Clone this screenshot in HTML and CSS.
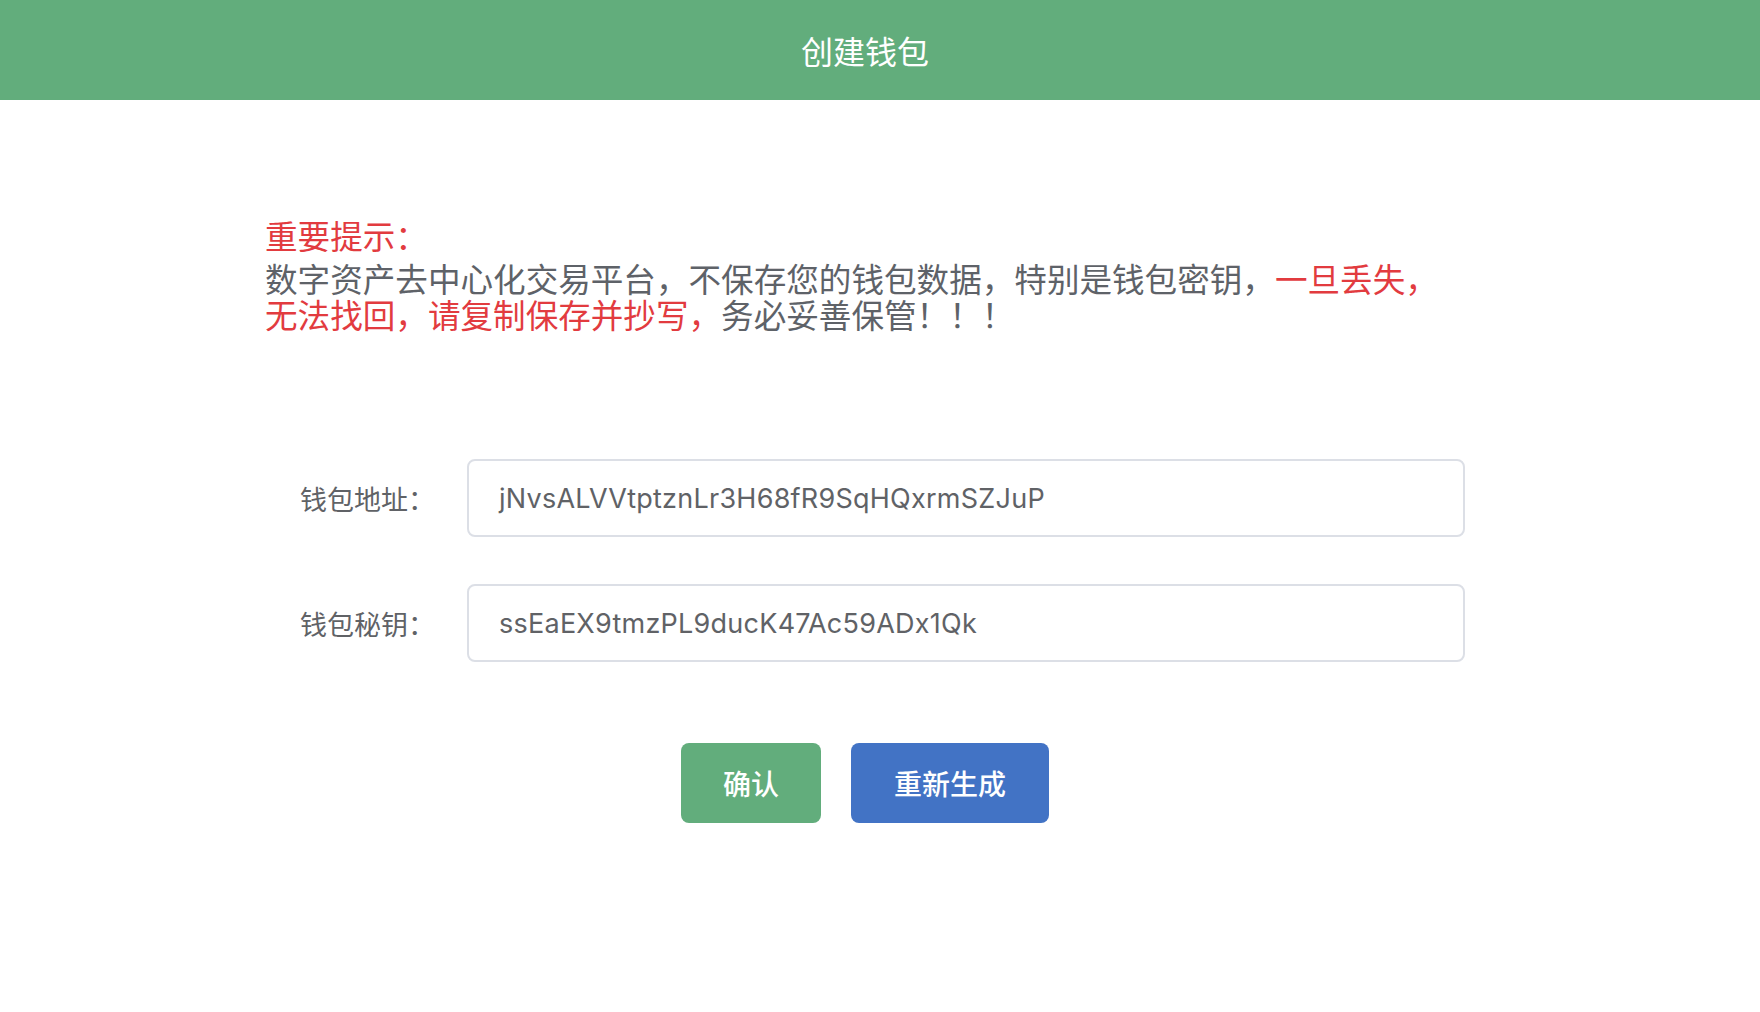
FILE: index.html
```html
<!DOCTYPE html>
<html lang="zh-CN">
<head>
<meta charset="utf-8">
<title>创建钱包</title>
<link rel="stylesheet" href="styles.css">
</head>
<body>
<header class="header"><h1 class="header-title">创建钱包</h1></header>
<div class="wrap">
  <main class="main">
    <section class="notice">
      <p class="notice-title">重要提示：</p>
      <p class="notice-text">数字资产去中心化交易平台，不保存您的钱包数据，特别是钱包密钥，<span class="red">一旦丢失，无法找回，请复制保存并抄写，</span>务必妥善保管！！！</p>
    </section>
    <form class="form">
      <div class="row">
        <label class="label">钱包地址：</label>
        <div class="input">jNvsALVVtptznLr3H68fR9SqHQxrmSZJuP</div>
      </div>
      <div class="row">
        <label class="label">钱包秘钥：</label>
        <div class="input">ssEaEX9tmzPL9ducK47Ac59ADx1Qk</div>
      </div>
      <div class="actions">
        <button type="button" class="btn btn-green">确认</button>
        <button type="button" class="btn btn-blue">重新生成</button>
      </div>
    </form>
  </main>
</div>
</body>
</html>
```
FILE: styles.css
```css
html, body {
  margin: 0;
  padding: 0;
  background: #fff;
}
body {
  font-family: "Noto Sans CJK SC", "Noto Sans", sans-serif;
}
.header {
  height: 100px;
  background: #62ad7c;
  display: flex;
  align-items: center;
  justify-content: center;
  padding-right: 30px;
}
.header-title {
  margin: 0;
  font-size: 32px;
  font-weight: 400;
  color: #fff;
  line-height: 1;
}
.wrap {
  padding-right: 30px;
}
.main {
  width: 1200px;
  margin: 117px auto 0;
}
.notice p {
  margin: 0;
  font-size: 32.6px;
  line-height: 36px;
}
.notice-title {
  color: #e23b3f;
  margin-bottom: 7px !important;
}
.notice-text {
  color: #5e6268;
}
.red {
  color: #e23b3f;
}
.form {
  margin-top: 127px;
}
.row {
  display: flex;
  align-items: center;
  height: 78px;
  margin-bottom: 47px;
}
.label {
  width: 202px;
  box-sizing: border-box;
  padding-right: 32px;
  text-align: right;
  font-size: 27px;
  color: #606266;
}
.input {
  flex: 1;
  height: 78px;
  box-sizing: border-box;
  border: 2px solid #dcdfe6;
  border-radius: 8px;
  padding: 0 30px;
  display: flex;
  align-items: center;
  font-family: "Inter", "Noto Sans CJK SC", sans-serif;
  font-size: 27px;
  letter-spacing: 0.25px;
  color: #606266;
}
.actions {
  display: flex;
  justify-content: center;
  gap: 30px;
  margin-top: 81px;
}
.btn {
  height: 80px;
  border: none;
  border-radius: 8px;
  color: #fff;
  font-family: "Noto Sans CJK SC", sans-serif;
  font-size: 28px;
  font-weight: 500;
  cursor: pointer;
}
.btn-green {
  padding: 0 42px;
  background: #62ad7c;
}
.btn-blue {
  padding: 0 43px;
  background: #4273c5;
}
```
